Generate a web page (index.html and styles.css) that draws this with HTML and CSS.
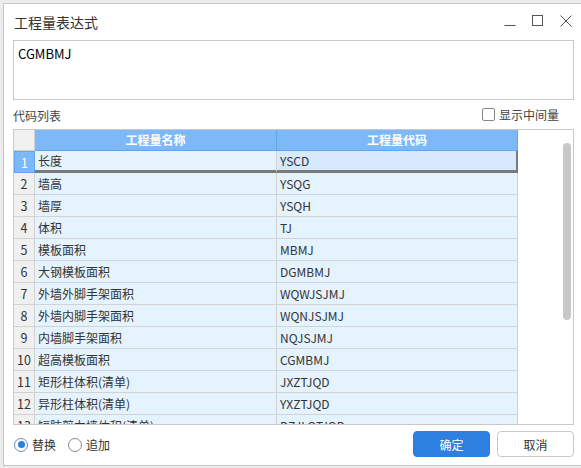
FILE: index.html
```html
<!DOCTYPE html>
<html lang="zh-CN">
<head>
<meta charset="utf-8">
<title>工程量表达式</title>
<link rel="stylesheet" href="styles.css">
</head>
<body>
<div class="dialog">
  <div class="titlebar">
    <div class="title">工程量表达式</div>
    <div class="controls">
      <svg class="ctl" width="12" height="12" viewBox="0 0 12 12"><path d="M0.5 10.5H11.5" stroke="#555" stroke-width="1" fill="none"/></svg>
      <svg class="ctl" width="12" height="12" viewBox="0 0 12 12"><rect x="0.5" y="0.5" width="10" height="10" stroke="#555" stroke-width="1" fill="none"/></svg>
      <svg class="ctl" width="12" height="12" viewBox="0 0 12 12"><path d="M0.5 0.5L11.5 11.5M11.5 0.5L0.5 11.5" stroke="#555" stroke-width="1" fill="none"/></svg>
    </div>
  </div>
  <div class="expr">CGMBMJ</div>
  <div class="labelrow">
    <span class="label">代码列表</span>
    <label class="check"><span class="box"></span>显示中间量</label>
  </div>
  <div class="grid">
    <div class="table">
      <div class="row head">
        <div class="num"></div>
        <div class="cell">工程量名称</div>
        <div class="cell">工程量代码</div>
      </div>
      <div class="row sel">
        <div class="num">1</div>
        <div class="cell">长度</div>
        <div class="cell code">YSCD</div>
      </div>
      <div class="row"><div class="num">2</div><div class="cell">墙高</div><div class="cell">YSQG</div></div>
      <div class="row"><div class="num">3</div><div class="cell">墙厚</div><div class="cell">YSQH</div></div>
      <div class="row"><div class="num">4</div><div class="cell">体积</div><div class="cell">TJ</div></div>
      <div class="row"><div class="num">5</div><div class="cell">模板面积</div><div class="cell">MBMJ</div></div>
      <div class="row"><div class="num">6</div><div class="cell">大钢模板面积</div><div class="cell">DGMBMJ</div></div>
      <div class="row"><div class="num">7</div><div class="cell">外墙外脚手架面积</div><div class="cell">WQWJSJMJ</div></div>
      <div class="row"><div class="num">8</div><div class="cell">外墙内脚手架面积</div><div class="cell">WQNJSJMJ</div></div>
      <div class="row"><div class="num">9</div><div class="cell">内墙脚手架面积</div><div class="cell">NQJSJMJ</div></div>
      <div class="row"><div class="num">10</div><div class="cell">超高模板面积</div><div class="cell">CGMBMJ</div></div>
      <div class="row"><div class="num">11</div><div class="cell">矩形柱体积(清单)</div><div class="cell">JXZTJQD</div></div>
      <div class="row"><div class="num">12</div><div class="cell">异形柱体积(清单)</div><div class="cell">YXZTJQD</div></div>
      <div class="row"><div class="num">13</div><div class="cell">短肢剪力墙体积(清单)</div><div class="cell">DZJLQTJQD</div></div>
    </div>
    <div class="side"><div class="thumb"></div></div>
  </div>
  <div class="footer">
    <div class="radios">
      <label class="radio"><span class="dot on"></span>替换</label>
      <label class="radio"><span class="dot"></span>追加</label>
    </div>
    <div class="buttons">
      <button class="btn primary">确定</button>
      <button class="btn">取消</button>
    </div>
  </div>
</div>
</body>
</html>
```

FILE: styles.css
```css
* { box-sizing: border-box; }
html, body { margin: 0; padding: 0; }
body {
  background: #ececec;
  width: 581px;
  height: 468px;
  overflow: hidden;
  font-family: "Noto Sans CJK SC", "Noto Sans", sans-serif;
  font-size: 12px;
  color: #333;
}
.dialog {
  margin: 3px 0 0 3px;
  width: 578px;
  height: 463px;
  background: #fff;
  border: 1px solid #c6c6c6;
  border-right: none;
  padding: 0 7px 0 9px;
  display: flex;
  flex-direction: column;
}
.titlebar {
  height: 36px;
  display: flex;
  align-items: center;
  justify-content: space-between;
}
.title {
  font-size: 14px;
  color: #333;
  padding-left: 1px;
  margin-top: -1px;
}
.controls {
  display: flex;
  gap: 16px;
  margin-top: -2px;
  margin-right: 2px;
}
.ctl { display: block; }
.expr {
  height: 60px;
  border: 1px solid #c8c8c8;
  padding: 4px 4px;
  font-size: 13px;
  color: #000;
  line-height: 18px;
}
.labelrow {
  height: 29px;
  display: flex;
  align-items: center;
  justify-content: space-between;
  padding-top: 1px;
}
.label { color: #444; }
.check {
  display: flex;
  align-items: center;
  gap: 4px;
  color: #444;
  margin-right: 15px;
  margin-top: -2px;
}
.box {
  width: 13px;
  height: 13px;
  border: 1px solid #888;
  border-radius: 2px;
  background: #fff;
}
.grid {
  height: 296px;
  border: 1px solid #c8c8c8;
  display: flex;
  overflow: hidden;
}
.table {
  width: 504px;
  flex: none;
}
.row {
  display: flex;
  height: 22px;
}
.num {
  width: 21px;
  flex: none;
  background: #f0f0f0;
  border-right: 1px solid #d2d2d2;
  border-bottom: 1px solid #d2d2d2;
  text-align: center;
  line-height: 21px;
  font-size: 12.5px;
  color: #333;
}
.cell {
  width: 241px;
  flex: none;
  background: #e5f3ff;
  border-right: 1px solid #d2d2d2;
  border-bottom: 1px solid #d2d2d2;
  padding-left: 3px;
  line-height: 21px;
  color: #333;
  white-space: nowrap;
  overflow: hidden;
}
.row .cell:nth-child(2) { width: 242px; }
.head { height: 21px; }
.head .num { background: #f0f0f0; border-bottom-color: #d2d2d2; }
.head .cell {
  background: #7db9f8;
  color: #fff;
  font-weight: bold;
  text-align: center;
  border-right-color: #5fa6ef;
  border-bottom: 1px solid #5fa6ef;
  line-height: 20px;
  padding-left: 0;
}
.sel .num {
  background: #7db9f8;
  color: #fff;
  border: 1px solid #5fa6ef;
}
.sel .cell {
  border-bottom: 3px solid #7a7a7a;
  line-height: 19px;
}
.sel .cell.code {
  background: #d6e9fd;
  border-right: 2px solid #7a7a7a;
}
.side {
  flex: 1;
  display: flex;
  justify-content: flex-end;
  align-items: flex-start;
  background: #fff;
}
.thumb {
  width: 8px;
  height: 177px;
  margin-top: 13px;
  margin-right: 2px;
  background: #c8c8c8;
  border-radius: 4px;
}
.footer {
  flex: 1;
  display: flex;
  justify-content: space-between;
  align-items: flex-start;
  padding-top: 6px;
}
.radios {
  display: flex;
  gap: 12px;
  margin-top: 5px;
  margin-left: 1px;
}
.radio {
  display: flex;
  align-items: center;
  gap: 4px;
  color: #333;
}
.dot {
  width: 14px;
  height: 14px;
  border: 1px solid #888;
  border-radius: 50%;
  background: #fff;
  display: flex;
  align-items: center;
  justify-content: center;
}
.dot.on { border-color: #6a8fba; }
.dot.on::after {
  content: "";
  width: 7px;
  height: 7px;
  border-radius: 50%;
  background: #2b7fe0;
}
.buttons {
  display: flex;
  gap: 7px;
}
.btn {
  width: 77px;
  height: 26px;
  border-radius: 4px;
  border: 1px solid #c8c8c8;
  background: #fff;
  font-family: inherit;
  font-size: 12px;
  color: #333;
  padding: 0;
}
.btn.primary {
  background: #2d80e0;
  border-color: #2d80e0;
  color: #fff;
}
```
